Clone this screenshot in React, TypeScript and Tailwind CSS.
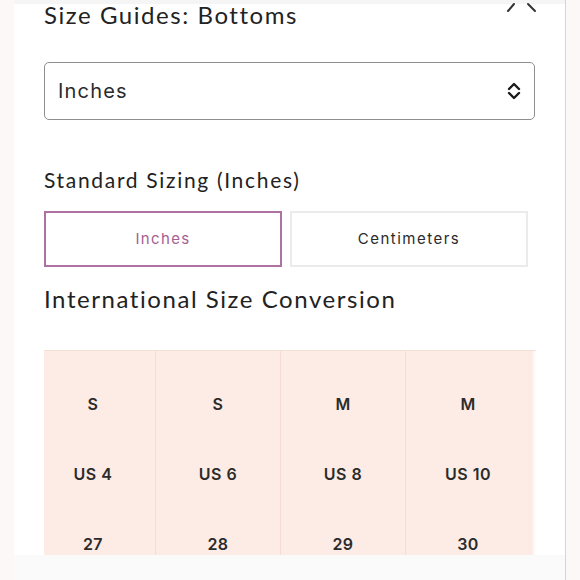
import React from 'react';

const heading = "font-['Lato','Noto_Sans',sans-serif] text-[#222]";
const body = "font-['Inter','Noto_Sans',sans-serif]";

const columns = [
  ['S', 'US 4', '27'],
  ['S', 'US 6', '28'],
  ['M', 'US 8', '29'],
  ['M', 'US 10', '30'],
  ['', '', ''],
];

const App: React.FC = () => {
  return (
    <div className="relative w-[580px] h-[580px] overflow-hidden bg-[#fbf8f7]">
      <div className="relative ml-[14px] w-[552px] h-full bg-white border-r border-[#d9d5d4]">
        {/* sticky header edge */}
        <div className="absolute top-0 left-0 right-0 h-[4px] bg-[#f5f5f5]" />
        <svg className="absolute left-[492px] top-0" width="32" height="13" viewBox="0 0 32 13" fill="none" stroke="#333" strokeWidth="2" strokeLinecap="round">
          <path d="M2 11 L8 4" />
          <path d="M22 4 L29 11" />
        </svg>

        <div className="px-[30px]">
          <h1 className={`${heading} text-[24px] leading-[30px] font-normal tracking-[0.065em]`}>Size Guides: Bottoms</h1>

          <div className="mt-[32px] h-[58px] flex items-center justify-between border border-[#8e8e8e] rounded-[5px] pl-[13px] pr-[12px]">
            <span className={`${body} text-[20px] tracking-[0.06em] text-[#2a2a2a]`}>Inches</span>
            <svg width="16" height="18" viewBox="0 0 16 18" fill="none" stroke="#1a1a1a" strokeWidth="2.4" strokeLinecap="round" strokeLinejoin="round">
              <path d="M3 7 L8 2 L13 7" />
              <path d="M3 11 L8 16 L13 11" />
            </svg>
          </div>

          <h2 className={`${heading} mt-[46px] text-[21px] leading-[28px] font-normal tracking-[0.08em]`}>Standard Sizing (Inches)</h2>

          <div className="mt-[17px] flex gap-[8px]">
            <button className={`${body} w-[238px] h-[56px] border-2 border-[#ad72a1] text-[15px] tracking-[0.09em] text-[#a65e93]`}>
              Inches
            </button>
            <button className={`${body} w-[238px] h-[56px] border-2 border-[#ebebeb] text-[15px] tracking-[0.1em] text-[#2a2a2a]`}>
              Centimeters
            </button>
          </div>

          <h2 className={`${heading} mt-[17px] text-[24px] leading-[30px] font-normal tracking-[0.065em]`}>International Size Conversion</h2>

          <div className="relative mt-[36px] w-[492px] overflow-hidden bg-[#fdebe5] border-t border-[#f5e0d8]">
            <div className="flex ml-[-13px]">
              {columns.map((col, i) => (
                <div key={i} className="w-[125px] shrink-0 pt-[18px] border-r border-[#f3ddd4]">
                  {col.map((cell, j) => (
                    <div key={j} className={`${body} h-[70px] flex items-center justify-center text-[16px] font-semibold text-[#2b2b2b] tracking-[0.03em]`}>
                      {cell}
                    </div>
                  ))}
                </div>
              ))}
            </div>
            <div className="absolute top-0 bottom-0 right-0 w-[6px] bg-gradient-to-r from-[#fbe6df] to-white" />
          </div>
        </div>

        {/* bottom overlay bar */}
        <div className="absolute left-0 right-0 top-[555px] bottom-0 bg-[#fafafa]" />
      </div>
    </div>
  );
};

export default App;
